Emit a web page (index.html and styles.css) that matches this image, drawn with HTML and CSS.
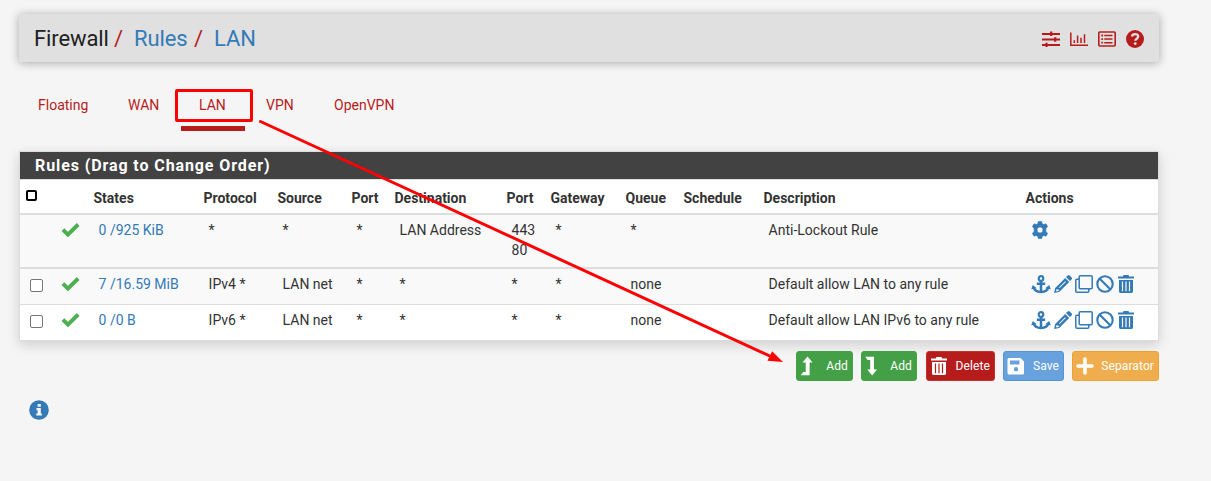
FILE: index.html
```html
<!DOCTYPE html>
<html lang="en">
<head>
<meta charset="utf-8">
<title>Firewall: Rules: LAN</title>
<link rel="stylesheet" href="styles.css">
</head>
<body>
<svg class="defs" aria-hidden="true">
  <symbol id="check" viewBox="0 0 18 14"><path d="M1.400 6.700l5 4.900L16.700 1.500" fill="none" stroke="currentColor" stroke-width="3.900"/></symbol>
  <symbol id="anchor" viewBox="0 0 20 19"><g fill="none" stroke="currentColor"><circle cx="10" cy="3.4" r="2.3" stroke-width="2.100"/><path d="M10 5.5V17M5.8 8.7h8.4" stroke-width="2.500"/><path d="M2.6 12.3c.7 3 3.800 4.600 7.400 4.600s6.700-1.600 7.400-4.600" stroke-width="2.500"/></g><path d="M.2 14.300l1.600-4.200 4 3.200zM19.800 14.300l-1.600-4.200-4 3.200z" fill="currentColor"/></symbol>
  <symbol id="pencil" viewBox="0 0 18 18"><path fill="currentColor" fill-rule="evenodd" d="M12 2.100L13.700.500q1-1 2 0l1.900 1.900q1 1 0 2L15.900 6.100zM11.200 2.900l4 4L5.200 16.900.100 18 1.200 12.900zM2.500 13.900l-.4 2 .6.600 2-.5v-1.600H3.100zM4.900 12.400l.7.700 6.200-6.200-.7-.7z"/></symbol>
  <symbol id="clone" viewBox="0 0 18 18"><g fill="none" stroke="currentColor" stroke-width="1.500"><rect x="4.200" y=".8" width="13" height="13" rx="1"/><path d="M4 4.200H1.800q-1 0-1 1v11q0 1 1 1h11q1 0 1-1V14"/></g></symbol>
  <symbol id="ban" viewBox="0 0 18 18"><g fill="none" stroke="currentColor" stroke-width="2.100"><circle cx="9" cy="9" r="7.700"/><path d="M3.500 3.500l11 11"/></g></symbol>
  <symbol id="trash" viewBox="0 0 16 18"><path fill="currentColor" fill-rule="evenodd" d="M0 1.400h4.800L5.500.1h5l.7 1.300H16v2H0zM1 4.900h14V16.500q0 1.400-1.400 1.400H2.400Q1 17.900 1 16.500zM3.900 6.500v9.700h1.200V6.500zM7.400 6.500v9.700h1.200V6.500zM10.900 6.500v9.700h1.200V6.500z"/></symbol>
  <symbol id="gear" viewBox="0 0 18 18"><path fill="currentColor" fill-rule="evenodd" stroke="currentColor" stroke-width=".6" stroke-linejoin="round" d="M7.300.5h3.400l.4 2.100 1.700 1 2.200-.8 1.700 2.900-1.800 1.500v3.600l1.800 1.500-1.700 2.900-2.200-.8-1.700 1-.4 2.100H7.300l-.4-2.100-1.700-1-2.200.8-1.700-2.900 1.800-1.500V7.200L1.300 5.700 3 2.800l2.200.8 1.700-1zM9 6a3 3 0 1 0 0 6 3 3 0 0 0 0-6z"/></symbol>
</svg>

<header class="page-head">
  <h1 class="crumbs"><span class="here">Firewall</span><i class="slash">/</i><a>Rules</a><i class="slash">/</i><a>LAN</a></h1>
  <nav class="tools">
    <svg viewBox="0 0 18 16"><path d="M0 3h18M0 8.500h18M0 14h18" stroke="currentColor" stroke-width="1.900"/><path d="M9.200.5v4.600M13.200 6.200v4.600M4.500 11.700v4.300" stroke="currentColor" stroke-width="2.200"/></svg>
    <svg viewBox="0 0 18 16"><path d="M.8 1.500V14.200H18" fill="none" stroke="currentColor" stroke-width="1.500"/><path d="M4.300 9.200v2.800M7.600 4.400V12M11 6.800V12M14.500 3.200V12" stroke="currentColor" stroke-width="1.500"/></svg>
    <svg viewBox="0 0 18 16"><rect x=".8" y="1" width="16.400" height="14" rx="1" fill="none" stroke="currentColor" stroke-width="1.600"/><path d="M6.300 4.500h8.200M6.300 8.100h8.200M6.300 11.700h8.200" stroke="currentColor" stroke-width="1.500"/><path d="M3.300 4.500h1.800M3.300 8.100h1.800M3.300 11.700h1.800" stroke="currentColor" stroke-width="1.800"/></svg>
    <svg class="help" viewBox="0 0 18 18"><circle cx="9" cy="9" r="9" fill="currentColor"/><path d="M5.900 6.500c.4-1.700 1.500-2.400 3.100-2.400 1.900 0 3.200 1 3.200 2.500 0 2.100-2.900 2.100-2.900 4.100" fill="none" stroke="#e0e0e0" stroke-width="2.300"/><circle cx="9.200" cy="13.600" r="1.400" fill="#e0e0e0"/></svg>
  </nav>
</header>

<nav class="tabs">
  <a class="tab floating">Floating</a><a class="tab wan">WAN</a><a class="tab lan active">LAN</a><a class="tab vpn">VPN</a><a class="tab">OpenVPN</a>
</nav>

<main class="panel">
  <h2 class="panel-title">Rules (Drag to Change Order)</h2>
  <table class="rules">
    <colgroup><col class="c-box"><col class="c-ok"><col class="c-states"><col class="c-proto"><col class="c-source"><col class="c-port"><col class="c-dest"><col class="c-dport"><col class="c-gate"><col class="c-queue"><col class="c-sched"><col class="c-desc"><col></colgroup>
    <thead><tr><th><span class="box all"></span></th><th></th><th>States</th><th>Protocol</th><th>Source</th><th>Port</th><th>Destination</th><th>Port</th><th>Gateway</th><th>Queue</th><th>Schedule</th><th>Description</th><th>Actions</th></tr></thead>
    <tbody>
      <tr class="lockout"><td></td><td class="ok"><svg><use href="#check"/></svg></td><td><a>0 /925 KiB</a></td><td>*</td><td>*</td><td>*</td><td>LAN Address</td><td>443<br>80</td><td>*</td><td>*</td><td></td><td>Anti-Lockout Rule</td><td><div class="actions"><svg class="gear"><use href="#gear"/></svg></div></td></tr>
      <tr class="odd"><td><span class="box"></span></td><td class="ok"><svg><use href="#check"/></svg></td><td><a>7 /16.59 MiB</a></td><td>IPv4 *</td><td>LAN net</td><td>*</td><td>*</td><td>*</td><td>*</td><td>none</td><td></td><td>Default allow LAN to any rule</td><td><div class="actions"><svg class="anchor"><use href="#anchor"/></svg><svg><use href="#pencil"/></svg><svg><use href="#clone"/></svg><svg><use href="#ban"/></svg><svg class="trash"><use href="#trash"/></svg></div></td></tr>
      <tr><td><span class="box"></span></td><td class="ok"><svg><use href="#check"/></svg></td><td><a>0 /0 B</a></td><td>IPv6 *</td><td>LAN net</td><td>*</td><td>*</td><td>*</td><td>*</td><td>none</td><td></td><td>Default allow LAN IPv6 to any rule</td><td><div class="actions"><svg class="anchor"><use href="#anchor"/></svg><svg><use href="#pencil"/></svg><svg><use href="#clone"/></svg><svg><use href="#ban"/></svg><svg class="trash"><use href="#trash"/></svg></div></td></tr>
    </tbody>
  </table>
</main>

<div class="buttons">
  <button class="btn add-top"><svg viewBox="0 0 18 20"><path fill="currentColor" d="M7.500.500l5 5.900H9.600V19.200H.700L3.200 16H5.700V6.400H2.500z"/></svg>Add</button>
  <button class="btn add-end"><svg viewBox="0 0 18 20"><path fill="currentColor" d="M.200.800h8.800v12.600h3L7.200 19.400 2.300 13.400h2.900V4H2.600z"/></svg>Add</button>
  <button class="btn delete"><svg viewBox="0 0 16 18"><use href="#trash"/></svg>Delete</button>
  <button class="btn save"><svg viewBox="0 0 18 18"><path fill="currentColor" fill-rule="evenodd" d="M2 1h11.500L17 4.500V16q0 1.500-1.500 1.500H2Q.500 17.500.500 16V2.500Q.500 1 2 1zM3 3.500v4h9.500v-4zM9 10a2.200 2.200 0 1 0 0 4.400 2.200 2.200 0 0 0 0-4.400z"/></svg>Save</button>
  <button class="btn separator"><svg viewBox="0 0 18 18"><path d="M9 2v14M2 9h14" stroke="currentColor" stroke-width="3.600" stroke-linecap="round"/></svg>Separator</button>
</div>

<svg class="info" viewBox="0 0 20 20"><circle cx="10" cy="10" r="9.800" fill="#337ab7"/><path fill="#f5f5f5" d="M8.600 4h3.200v2.700H8.600zM7.500 8.100h4.300v5.300h1.100v2.200H7.300v-2.200h1.300v-3.100H7.500z"/></svg>

<svg class="arrow" viewBox="0 0 1211 481"><path d="M260.500 121.500L773 357.500" stroke="#f00" stroke-width="3" stroke-linecap="round"/><path d="M783 362l-15.500-1.300 4.600-9.400z" fill="#f00"/></svg>
</body>
</html>
```

FILE: styles.css
```css
* { box-sizing: border-box; }
body { margin: 0; height: 481px; overflow: hidden; padding: 14px 52px 0 19px; background: #f5f5f5; color: #333; font: 14px/20px Roboto, sans-serif; }
a { color: #337ab7; }
svg { display: block; flex: none; }
.defs { display: none; }

.page-head { display: flex; justify-content: space-between; align-items: center; height: 48px; padding: 0 15px; background: #e0e0e0; border-radius: 2px; box-shadow: 0 1px 10px rgba(0,0,0,.32); }
.crumbs { display: flex; margin: 0; font-size: 22px; line-height: 48px; font-weight: 400; letter-spacing: -.1px; padding-top: 1px; }
.here { width: 80px; color: #212121; }
.crumbs a { width: 60px; }
.slash { width: 20px; color: #b71c1c; font-style: normal; }
.tools { display: flex; align-items: center; gap: 10px; color: #b71c1c; padding-top: 2px; }
.tools svg { width: 18px; height: 16px; }
.tools .help { height: 18px; }

.tabs { display: flex; height: 69px; margin-top: 21px; }
.tab { height: 48px; padding: 12px 20px 0 19px; color: #b71c1c; font-size: 14px; }
.floating { width: 90px; }
.wan { width: 72px; }
.lan { position: relative; width: 64px; padding-left: 18px; border-bottom: 5px solid #b71c1c; }
.lan::after { content: ""; box-sizing: border-box; position: absolute; left: -6px; top: 6px; width: 78px; height: 33px; border: 3px solid #f00; border-radius: 2px; }
.vpn { width: 70px; padding-left: 21px; }
.tab:last-child { padding-left: 19px; }

.panel { height: 190px; margin-top: -1px; border: 1px solid #ddd; background: #fff; box-shadow: 0 4px 12px rgba(0,0,0,.16); }
.panel-title { height: 27px; margin: 0; padding-left: 15px; background: #424242; color: #fff; font-size: 16px; line-height: 27px; font-weight: 700; letter-spacing: .9px; }
.rules { width: 100%; table-layout: fixed; border-collapse: separate; border-spacing: 0; border-top: 1px solid #ddd; }
.c-box { width: 35px; } .c-ok { width: 34px; } .c-states { width: 110px; } .c-proto { width: 74px; } .c-source { width: 74px; } .c-port { width: 43px; } .c-dest { width: 112px; } .c-dport { width: 44px; } .c-gate { width: 75px; } .c-queue { width: 58px; } .c-sched { width: 80px; } .c-desc { width: 262px; }
th { height: 35px; padding: 2px 4.500px 0; border-bottom: 2px solid #ddd; text-align: left; font-size: 14px; font-weight: 700; white-space: nowrap; }
td { height: 36px; padding: 5px 0 0 9.600px; border-bottom: 1px solid #ddd; vertical-align: top; white-space: nowrap; }
tr:last-child td { border-bottom: 0; height: 35px; }
.lockout td { height: 54px; border-bottom: 2px solid #ddd; }
.lockout, .odd { background: #f9f9f9; }
.box { display: block; width: 13px; height: 13px; margin-top: 5px; border: 1px solid #767676; border-radius: 2px; background: #fff; }
.box.all { width: 11px; height: 11px; margin: -5px 0 0 1px; border: 2px solid #000; }
td.ok { padding: 8px 0 0 6px; }
.ok svg { width: 19px; height: 14px; color: #4caf50; }
.actions { display: flex; gap: 3.300px; padding-top: 1px; color: #337ab7; }
.actions svg { width: 18px; height: 18px; }
.actions .anchor { width: 20px; height: 19px; }
.actions .trash { width: 16px; }

.buttons { display: flex; justify-content: flex-end; gap: 8px; margin-top: 10px; }
.btn { display: flex; align-items: center; justify-content: space-between; height: 30px; padding: 0 4px 0 3px; border: 1px solid; border-radius: 3px; color: #fff; font: 12px/18px Roboto, sans-serif; letter-spacing: .1px; }
.btn svg { width: 18px; height: 18px; }
.add-top, .add-end { width: 57px; background: #43a047; border-color: #43a047; }
.add-top svg, .add-end svg { height: 20px; }
.add-end { width: 56px; margin-right: 1px; }
.delete { width: 69px; background: #b71c1c; border-color: #c9302c; }
.save { width: 61px; background: #67a1de; border-color: #5794d5; }
.separator { width: 87px; background: #f0ad4e; border-color: #eea236; }
.info { width: 20px; height: 20px; margin: 19px 0 0 10px; }
.arrow { position: absolute; left: 0; top: 0; width: 1211px; height: 481px; pointer-events: none; }
```
